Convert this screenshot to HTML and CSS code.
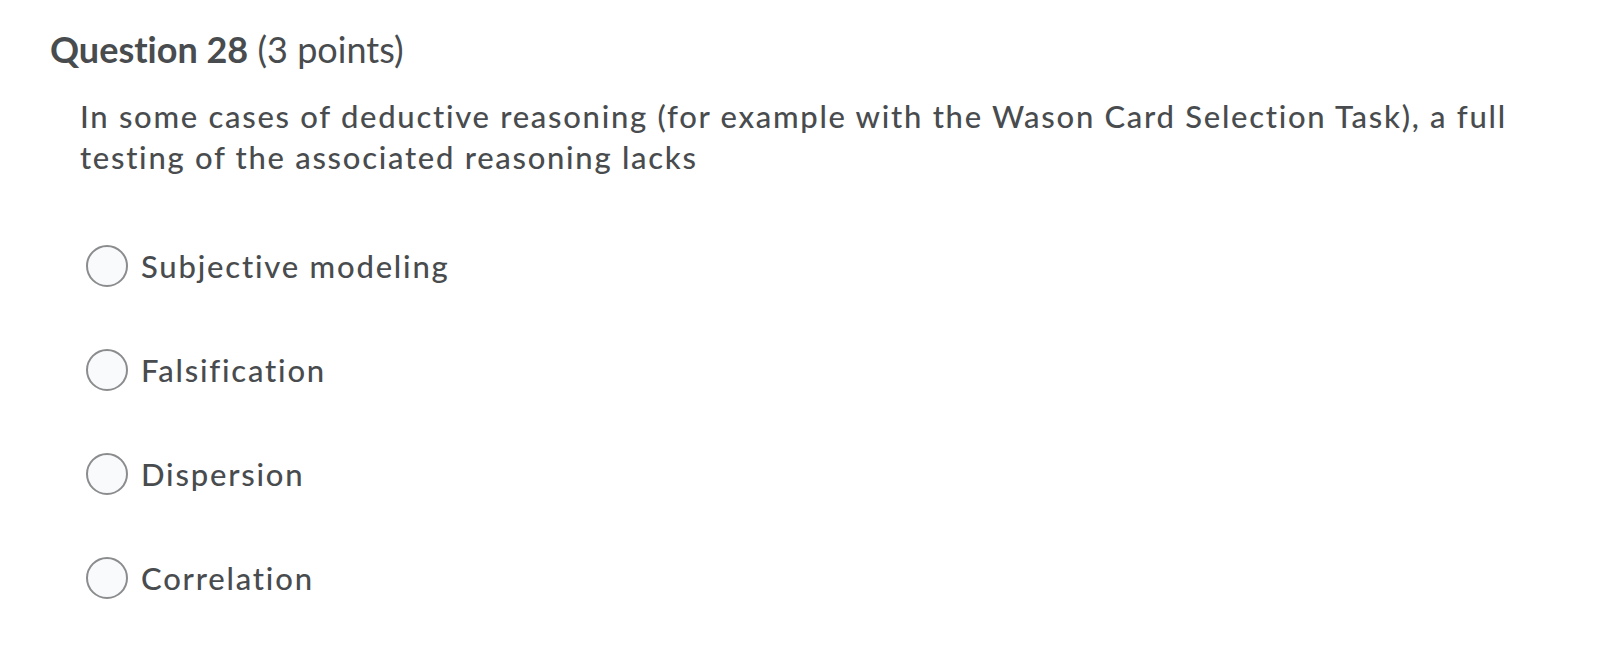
FILE: index.html
```html
<!DOCTYPE html>
<html>
<head>
    <title>Question 28</title>
    <link rel="stylesheet" href="styles.css">
</head>
<body>
    <div class="question">
        <h2 class="question-title"><strong>Question 28</strong> (3 points)</h2>
        <p class="question-text">In some cases of deductive reasoning (for example with the Wason Card Selection Task), a full testing of the associated reasoning lacks</p>
        <div class="choices">
            <label class="choice"><input type="radio" name="q28"><span class="radio"></span>Subjective modeling</label>
            <label class="choice"><input type="radio" name="q28"><span class="radio"></span>Falsification</label>
            <label class="choice"><input type="radio" name="q28"><span class="radio"></span>Dispersion</label>
            <label class="choice"><input type="radio" name="q28"><span class="radio"></span>Correlation</label>
        </div>
    </div>
</body>
</html>
```

FILE: styles.css
```css
body {
    margin: 0;
    background-color: #ffffff;
    font-family: Lato, "Open Sans", sans-serif;
    font-variant-ligatures: none;
    color: #494c4e;
}
.question {
    padding: 28px 0 0 50px;
}
.question-title {
    margin: 0;
    font-size: 36px;
    font-weight: normal;
    line-height: 42px;
}
.question-title strong {
    font-weight: bold;
}
.question-text {
    margin: 26px 0 0 30px;
    max-width: 1460px;
    font-size: 31px;
    font-weight: 500;
    line-height: 41px;
    letter-spacing: 1.72px;
}
.choices {
    margin: 67px 0 0 36px;
}
.choice {
    display: flex;
    align-items: center;
    gap: 13px;
    height: 42px;
    margin-bottom: 62px;
    font-size: 31px;
    font-weight: 500;
    letter-spacing: 1.8px;
}
.choice input {
    display: none;
}
.radio {
    box-sizing: border-box;
    width: 42px;
    height: 42px;
    border: 2px solid #8a8c8e;
    border-radius: 50%;
    background-color: #f9fafb;
}
```
